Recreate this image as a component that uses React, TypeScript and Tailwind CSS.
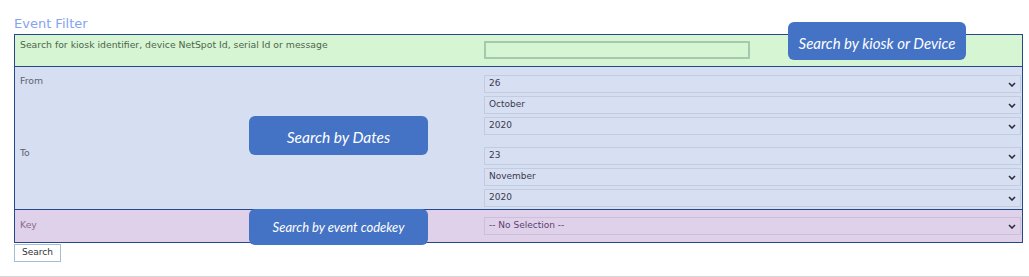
import React from 'react';

const Chevron = () => (
  <svg width="8" height="5" viewBox="0 0 8 5" className="shrink-0">
    <polyline points="1,1 4,4 7,1" fill="none" stroke="#2d2d3a" strokeWidth="1.6" />
  </svg>
);

const FakeSelect = ({ value, tone }: { value: string; tone: 'blue' | 'purple' }) => (
  <div
    className={
      'flex h-[18px] items-center justify-between border pl-[4px] pr-[4px] text-[9px] ' +
      (tone === 'blue'
        ? 'border-[#c3cbe0] bg-[#d7dff2] text-[#3d3a4e]'
        : 'border-[#cdbfd9] bg-[#e0d1ea] text-[#5b3f6e]')
    }
  >
    <span>{value}</span>
    <Chevron />
  </div>
);

const Callout = ({ text, className }: { text: string; className: string }) => (
  <div
    className={
      'absolute flex items-center justify-center rounded-[6px] bg-[#4472c4] italic text-white ' +
      className
    }
    style={{ fontFamily: 'Lato, "Open Sans", sans-serif' }}
  >
    {text}
  </div>
);

export default function App() {
  return (
    <div
      className="relative h-[277px] w-[1029px] overflow-hidden bg-white"
      style={{ fontFamily: '"DejaVu Sans", Verdana, sans-serif' }}
    >
      <div className="pl-[14px] pr-[6px]">
        <h1 className="pt-[13px] text-[13px] leading-[21px] text-[#85a3ee]">Event Filter</h1>

        <div className="border-x border-t border-[#274888]">
          {/* kiosk / device */}
          <div className="flex h-[32px] border-b border-[#274888] bg-[#d6f5d2]">
            <div className="w-[469px] pl-[5px] pt-[4px] text-[9.3px] leading-[11px] text-[#4f6450]">
              Search for kiosk identifier, device NetSpot Id, serial Id or message
            </div>
            <div className="pt-[6px]">
              <div className="h-[18px] w-[266px] border-2 border-[#a4c9ae] bg-[#d6f5d2]" />
            </div>
          </div>

          {/* dates */}
          <div className="flex flex-col gap-[12px] border-b border-[#274888] bg-[#d6dff2] pb-[2px] pt-[8px]">
            <div className="flex">
              <div className="w-[469px] pl-[5px] text-[9.3px] leading-[11px] text-[#5e6270]">From</div>
              <div className="flex flex-1 flex-col gap-[3px] pr-px">
                <FakeSelect value="26" tone="blue" />
                <FakeSelect value="October" tone="blue" />
                <FakeSelect value="2020" tone="blue" />
              </div>
            </div>
            <div className="flex">
              <div className="w-[469px] pl-[5px] text-[9.3px] leading-[11px] text-[#5e6270]">To</div>
              <div className="flex flex-1 flex-col gap-[3px] pr-px">
                <FakeSelect value="23" tone="blue" />
                <FakeSelect value="November" tone="blue" />
                <FakeSelect value="2020" tone="blue" />
              </div>
            </div>
          </div>

          {/* key */}
          <div className="flex h-[33px] border-b border-[#274888] bg-[#e0d1ea] pt-[7px]">
            <div className="w-[469px] pl-[5px] pt-[2px] text-[9.3px] leading-[11px] text-[#8a6c8c]">Key</div>
            <div className="flex-1 pr-px">
              <FakeSelect value="-- No Selection --" tone="purple" />
            </div>
          </div>
        </div>

        <button className="mt-[1px] block h-[18px] w-[47px] border border-[#a6bcd3] bg-white text-[9px] text-[#333]">
          Search
        </button>
      </div>

      <div className="mt-[14px] border-t-2 border-[#d6d6d6]" />

      <Callout text="Search by kiosk or Device" className="left-[788px] top-[22px] h-[38px] w-[178px] pt-[5px] text-[15px]" />
      <Callout text="Search by Dates" className="left-[249px] top-[116px] h-[39px] w-[179px] pt-[5px] text-[15.5px]" />
      <Callout text="Search by event codekey" className="left-[249px] top-[209px] h-[36px] w-[179px] pt-[2px] text-[13px]" />
    </div>
  );
}
